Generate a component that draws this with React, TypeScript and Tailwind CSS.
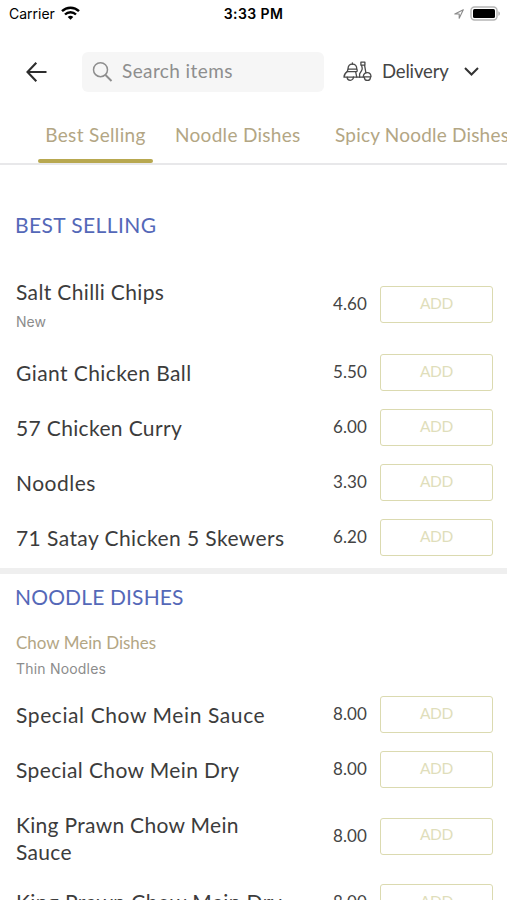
import { ReactNode } from "react";

type Item = { name: string; price: string; note?: string; className?: string };

const bestSelling: Item[] = [
  { name: "Salt Chilli Chips", price: "4.60", note: "New", className: "pt-[2px] tracking-[0.35px]" },
  { name: "Giant Chicken Ball", price: "5.50", className: "tracking-[0.42px]" },
  { name: "57 Chicken Curry", price: "6.00", className: "tracking-[0.35px]" },
  { name: "Noodles", price: "3.30", className: "tracking-[0.500px]" },
  { name: "71 Satay Chicken 5 Skewers", price: "6.20", className: "tracking-[0.42px]" },
];

const noodleDishes: Item[] = [
  { name: "Special Chow Mein Sauce", price: "8.00", className: "tracking-[0.6px]" },
  { name: "Special Chow Mein Dry", price: "8.00", className: "tracking-[0.38px]" },
  { name: "King Prawn Chow Mein Sauce", price: "8.00", className: "pt-[2px] -mb-[2px] tracking-[0.3px]" },
  { name: "King Prawn Chow Mein Dry", price: "8.00", className: "pb-[3px] tracking-[0.4px]" },
];

const StatusBar = () => (
  <div className="grid h-[27px] grid-cols-3 items-center pl-[9px] pr-[6px] font-['Inter',sans-serif] text-[14px] text-black">
    <div className="flex items-center gap-[6px]">
      <span>Carrier</span>
      <svg className="-mt-[2px]" width="19" height="14" viewBox="0 0 19 14" fill="none" stroke="#000" strokeWidth="2.4">
        <path d="M1 5.2a12.2 12.2 0 0 1 17 0" />
        <path d="M4 8.5a7.8 7.8 0 0 1 11 0" />
        <path d="M6.7 11 9.5 13.8 12.3 11a4 4 0 0 0-5.6 0z" fill="#000" stroke="none" />
      </svg>
    </div>
    <span className="-ml-[3px] text-center font-semibold tracking-[0.4px]">3:33 PM</span>
    <div className="flex items-center justify-end gap-[6px]">
      <svg width="10" height="10" viewBox="0 0 10 10" fill="none" stroke="#8a8a8a" strokeWidth="1.1">
        <path d="M9.300.8.8 5h4.400v4.300z" strokeLinejoin="round" />
      </svg>
      <svg width="31" height="15" viewBox="0 0 31 15">
        <rect x="1" y="1" width="26" height="13" rx="3.5" fill="#fff" stroke="#b5b5b5" strokeWidth="1.4" />
        <rect x="3" y="3" width="22" height="9" rx="1.5" fill="#000" />
        <path d="M28.4 5.2c2 .8 2 3.8 0 4.6z" fill="#b0b0b0" />
      </svg>
    </div>
  </div>
);

const ScooterIcon = () => (
  <svg width="29" height="21" viewBox="0 0 29 21" fill="none" stroke="#4a4a4a" strokeWidth="1.3" strokeLinecap="round" strokeLinejoin="round">
    <path d="M5 8.200c0-3 1.800-5 4.400-5s4.400 2 4.400 5z" />
    <path d="M9.400 3.200V1.800" />
    <path d="M5 8.200 4.200 10.600h9.200c.6 0 .8-.4.8-1.200L13.800 8.200" />
    <path d="M4.200 10.600C2 12 1 13.800 1 16.200h9.400" />
    <path d="M12.600 10.600 13.800 16.200H10.400" />
    <path d="M4.200 16.200a3.100 3.100 0 1 0 6.200 0" />
    <path d="M13.800 16.200h7.600" />
    <path d="M17.900 1.200h4v3h-4zM18.600 4.400l.6 2.800c.1 1-.3 2-.9 2.900l-1.700 2.700v3.400M21.600 4.400l1.300 7.400" />
    <path d="M20.200 16c.2-2.500 1.800-4.400 4-4.400 2.400 0 3.800 1.700 3.800 4.200h-6.400" />
    <path d="M21.400 16.400a3 3 0 1 0 6 0" />
  </svg>
);

const Header = () => (
  <div className="flex h-[89px] items-center pl-[26px]">
    <svg width="22" height="22" viewBox="0 0 22 22" fill="none" stroke="#2d2d2d" strokeWidth="2.1">
      <path d="M20.500 11H1.800M10.300 1.800 1.500 11l8.800 9.200" />
    </svg>
    <div className="ml-[34px] flex h-10 w-[242px] items-center rounded-md bg-[#f6f6f6] pl-[10px] text-[#8e8e8e]">
      <svg width="22" height="22" viewBox="0 0 22 22" fill="none" stroke="currentColor" strokeWidth="1.500">
        <circle cx="8.500" cy="8.700" r="7" />
        <path d="m13.500 14 6 6" strokeWidth="2" />
      </svg>
      <span className="ml-[8px] text-[19px] tracking-[0.4px]">Search items</span>
    </div>
    <div className="ml-[19px] flex items-center text-[#454545]">
      <ScooterIcon />
      <span className="ml-[10px] w-[67px] text-[18.500px] tracking-[-0.15px]">Delivery</span>
      <svg className="ml-[15px]" width="15" height="9" viewBox="0 0 15 9" fill="none" stroke="#333" strokeWidth="2">
        <path d="m1 1 6.500 6.500L14 1" />
      </svg>
    </div>
  </div>
);

const Tabs = () => (
  <nav className="flex h-[49px] overflow-hidden border-b-2 border-[#e8e8ea] pl-[38px] text-[19px] leading-[38px] whitespace-nowrap text-[#b3a684]">
    <div className="flex w-[115px] shrink-0 flex-col items-center justify-between">
      <span className="tracking-[0.35px]">Best Selling</span>
      <span className="h-1 w-full rounded-sm bg-[#b8a850]" />
    </div>
    <span className="ml-[22px] w-[160px] shrink-0 tracking-[0.3px]">Noodle Dishes</span>
    <span className="shrink-0 tracking-[0.2px]">Spicy Noodle Dishes</span>
  </nav>
);

const SectionTitle = ({ children }: { children: ReactNode }) => (
  <h2 className="-ml-px text-[21px] leading-7 text-[#5468b8]">{children}</h2>
);

const MenuRow = ({ item }: { item: Item }) => (
  <div className="flex min-h-[55px] items-center py-3">
    <div className="w-[280px] shrink-0">
      <p className={`text-[21px] leading-[27px] text-[#3c3c3c] ${item.className}`}>{item.name}</p>
      {item.note && (
        <p className="mt-[6px] font-['Inter',sans-serif] text-[14px] leading-[22px] text-[#8c8c8c]">{item.note}</p>
      )}
    </div>
    <span className="w-[71px] shrink-0 pb-px text-right text-[17px] tracking-[0.1px] text-[#444]">{item.price}</span>
    <button className="-my-3 ml-[13px] h-[37px] w-[113px] shrink-0 rounded-[3px] border border-[#dbdab0] pb-[2px] text-[15.500px] tracking-[-0.3px] text-[#dfdebb]">
      ADD
    </button>
  </div>
);

const App = () => {
  return (
    <main className="h-[900px] w-[507px] overflow-hidden bg-white font-['Lato',sans-serif]">
      <StatusBar />
      <Header />
      <Tabs />

      {/* Best selling */}
      <section className="h-[403px] pt-[46px] pr-[15px] pl-4">
        <div className="tracking-[0.4px]">
          <SectionTitle>BEST SELLING</SectionTitle>
        </div>
        <div className="pt-[25px]">
          {bestSelling.map((item) => (
            <MenuRow key={item.name} item={item} />
          ))}
        </div>
      </section>

      <div className="h-[6px] bg-[#efefef]" />

      {/* Noodle dishes */}
      <section className="pt-[9px] pr-[15px] pl-4">
        <div className="tracking-[0.15px]">
          <SectionTitle>NOODLE DISHES</SectionTitle>
        </div>
        <h3 className="mt-5 text-[17px] leading-6 text-[#b3a684]">Chow Mein Dishes</h3>
        <p className="mt-1 font-['Inter',sans-serif] text-[14px] leading-5 tracking-[0.2px] text-[#8c8c8c]">Thin Noodles</p>
        <div className="pt-2">
          {noodleDishes.map((item) => (
            <MenuRow key={item.name} item={item} />
          ))}
        </div>
      </section>
    </main>
  );
};

export default App;
